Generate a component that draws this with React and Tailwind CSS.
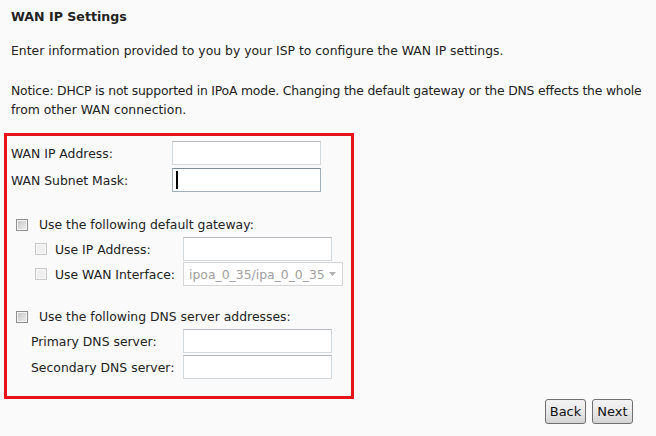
const font = { fontFamily: '"DejaVu Sans", Verdana, sans-serif' };

function TextBox({ focused = false, width = 'w-[149px]' }) {
  return (
    <div
      className={`${width} h-[24px] bg-white border flex items-center pl-[3px] ${
        focused ? 'border-[#9fb0bb] border-t-[#7d8d98]' : 'border-[#d3d8dd] border-t-[#b4b8bd]'
      }`}
    >
      {focused && <span className="w-[2px] h-[18px] bg-black" />}
    </div>
  );
}

function Check({ disabled = false }) {
  return (
    <span
      className={`w-[12px] h-[12px] border inline-flex items-center justify-center shrink-0 ${
        disabled ? 'border-[#c9c9c9] bg-[#f6f6f6]' : 'border-[#8e8f8f] bg-[#f4f4f4]'
      }`}
    >
      <span
        className={`w-[8px] h-[8px] ${
          disabled ? 'bg-[#f0f0f0]' : 'bg-gradient-to-br from-[#c8c8c8] to-[#ececec]'
        }`}
      />
    </span>
  );
}

function Button({ children }) {
  return (
    <button className="w-[41px] h-[25px] rounded-[3px] border border-[#707070] bg-gradient-to-b from-[#f3f3f3] via-[#e8e8e8] to-[#d4d4d4] text-[#111] text-[13px] leading-none">
      {children}
    </button>
  );
}

export default function App() {
  return (
    <div className="w-[656px] h-[436px] overflow-hidden bg-[#fafafa] text-[#222] text-[12.4px] leading-[19px]" style={font}>
      {/* Header texts */}
      <div className="pl-[11px] pt-[7px]">
        <h3 className="font-bold text-[12.6px] leading-[19px]">WAN IP Settings</h3>
        <p className="mt-[15px] whitespace-nowrap">
          Enter information provided to you by your ISP to configure the WAN IP settings.
        </p>
        <p className="mt-[21px] whitespace-nowrap">
          <span className="tracking-[-0.2px]">
            Notice: DHCP is not supported in IPoA mode. Changing the default gateway or the DNS effects the whole
          </span>
          <br />
          from other WAN connection.
        </p>
      </div>

      {/* Highlighted form */}
      <div className="ml-[4px] mt-[14px] w-[350px] h-[266px] border-[3px] border-[#e5141b] pt-[5px]">
        <div className="flex flex-col gap-[3px]">
          <div className="flex items-center">
            <span className="w-[165px] pl-[4px]">WAN IP Address:</span>
            <TextBox />
          </div>
          <div className="flex items-center">
            <span className="w-[165px] pl-[4px]">WAN Subnet Mask:</span>
            <TextBox focused />
          </div>
        </div>

        {/* Default gateway */}
        <div className="mt-[23px] flex items-center h-[19px] pl-[9px]">
          <Check />
          <span className="ml-[11px]">Use the following default gateway:</span>
        </div>
        <div className="mt-[3px] flex flex-col gap-[1px]">
          <div className="flex items-center h-[24px] pl-[28px]">
            <Check disabled />
            <span className="ml-[8px] w-[128px]">Use IP Address:</span>
            <TextBox />
          </div>
          <div className="flex items-center h-[24px] pl-[28px]">
            <Check disabled />
            <span className="ml-[8px] w-[128px]">Use WAN Interface:</span>
            <div className="w-[160px] h-[24px] bg-white border border-[#d6d6d6] flex items-center pl-[5px] pr-[6px] text-[#a0a0a0]">
              <span className="flex-1">ipoa_0_35/ipa_0_0_35</span>
              <svg width="7" height="4" viewBox="0 0 7 4">
                <path d="M0 0h7L3.5 4z" fill="#b0b0b0" />
              </svg>
            </div>
          </div>
        </div>

        {/* DNS */}
        <div className="mt-[21px] flex items-center h-[19px] pl-[9px]">
          <Check />
          <span className="ml-[11px]">Use the following DNS server addresses:</span>
        </div>
        <div className="mt-[3px] flex flex-col gap-[2px]">
          <div className="flex items-center pl-[24px]">
            <span className="w-[152px]">Primary DNS server:</span>
            <TextBox />
          </div>
          <div className="flex items-center pl-[24px]">
            <span className="w-[152px]">Secondary DNS server:</span>
            <TextBox />
          </div>
        </div>
      </div>

      {/* Navigation */}
      <div className="flex justify-end gap-[6px] pr-[23px]">
        <Button>Back</Button>
        <Button>Next</Button>
      </div>
    </div>
  );
}
